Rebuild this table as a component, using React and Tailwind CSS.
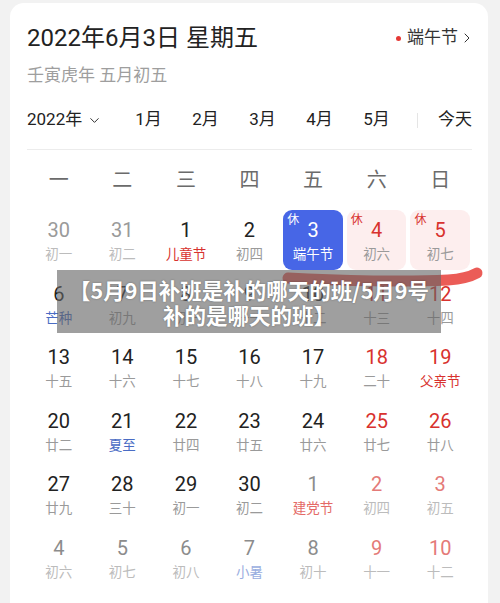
import React from 'react';
import { ChevronDown, ChevronRight } from 'lucide-react';

// colour keys -> full class names
const NUM = {
  base: 'text-[#222222]',
  prev: 'text-[#9a9a9a]',
  red: 'text-[#d8322e]',
  next: 'text-[#8c8c8c]',
  nextRed: 'text-[#e47a78]',
  white: 'text-white',
};

const LUNAR = {
  base: 'text-[#9a9a9a]',
  light: 'text-[#bcbcbc]',
  red: 'text-[#d8322e]',
  blue: 'text-[#4a6cc4]',
  lightRed: 'text-[#e46a66]',
  lightBlue: 'text-[#9aaee0]',
  white: 'text-white',
};

const d = (n, l, nc = 'base', lc = 'base', extra = {}) => ({ n, l, nc, lc, ...extra });

const weeks = [
  [
    d('30', '初一', 'prev', 'light'),
    d('31', '初二', 'prev', 'light'),
    d('1', '儿童节', 'base', 'red'),
    d('2', '初四'),
    d('3', '端午节', 'white', 'white', { today: true, rest: true }),
    d('4', '初六', 'red', 'base', { holiday: true, rest: true }),
    d('5', '初七', 'red', 'base', { holiday: true, rest: true }),
  ],
  [
    d('6', '芒种', 'base', 'blue'),
    d('7', '初九'),
    d('8', '初十'),
    d('9', '十一'),
    d('10', '十二'),
    d('11', '十三', 'red'),
    d('12', '十四', 'red'),
  ],
  [
    d('13', '十五'),
    d('14', '十六'),
    d('15', '十七'),
    d('16', '十八'),
    d('17', '十九'),
    d('18', '二十', 'red'),
    d('19', '父亲节', 'red', 'red'),
  ],
  [
    d('20', '廿二'),
    d('21', '夏至', 'base', 'blue'),
    d('22', '廿四'),
    d('23', '廿五'),
    d('24', '廿六'),
    d('25', '廿七', 'red'),
    d('26', '廿八', 'red'),
  ],
  [
    d('27', '廿九'),
    d('28', '三十'),
    d('29', '初一'),
    d('30', '初二'),
    d('1', '建党节', 'next', 'lightRed'),
    d('2', '初四', 'nextRed', 'light'),
    d('3', '初五', 'nextRed', 'light'),
  ],
  [
    d('4', '初六', 'next', 'light'),
    d('5', '初七', 'next', 'light'),
    d('6', '初八', 'next', 'light'),
    d('7', '小暑', 'next', 'lightBlue'),
    d('8', '初十', 'next', 'light'),
    d('9', '十一', 'nextRed', 'light'),
    d('10', '十二', 'nextRed', 'light'),
  ],
];

const weekdays = ['一', '二', '三', '四', '五', '六', '日'];
const months = ['1月', '2月', '3月', '4月', '5月'];

const DayCell = ({ day }) => {
  const box = day.today
    ? 'bg-[#4766e6]'
    : day.holiday
    ? 'bg-[#fdeeee]'
    : '';
  return (
    <div className="h-[63.5px] p-[2px]">
      <div className={`relative h-full rounded-[9px] flex flex-col items-center pt-[8px] ${box}`}>
        {day.rest && (
          <span
            className={`absolute left-[4px] top-[3px] text-[12px] leading-[14px] ${
              day.today ? 'text-white' : 'text-[#d8322e]'
            }`}
          >
            休
          </span>
        )}
        <span className={`text-[20px] leading-[24px] ${NUM[day.nc]}`}>{day.n}</span>
        <span className={`mt-[3px] text-[13.5px] leading-[18px] ${LUNAR[day.lc]}`}>{day.l}</span>
      </div>
    </div>
  );
};

export default function App() {
  return (
    <div
      className="relative w-[500px] h-[603px] overflow-hidden bg-[#f2f2f2]"
      style={{ fontFamily: 'Roboto, "Noto Sans CJK SC", sans-serif' }}
    >
      <div className="ml-[10px] mt-[3px] w-[478px] h-[640px] bg-white rounded-t-[14px] pl-[17px] pr-[16px] pt-[15px]">
        {/* Header */}
        <div className="h-[40px] flex items-center justify-between">
          <h1 className="text-[24px] leading-[32px] text-[#222222] font-normal">2022年6月3日 星期五</h1>
          <div className="flex items-center text-[17px] text-[#333333]">
            <span className="w-[5px] h-[5px] rounded-full bg-[#e53935] mr-[6px]" />
            端午节
            <ChevronRight size={16} strokeWidth={1.5} className="ml-[1px] -mr-[3px]" />
          </div>
        </div>
        <div className="mt-[6px] h-[24px] flex items-center text-[17px] text-[#9e9e9e]">
          壬寅虎年 五月初五
        </div>

        {/* Month switcher */}
        <div className="mt-[12px] h-[40px] flex items-center whitespace-nowrap text-[17px] text-[#222222]">
          <div className="w-[93px] shrink-0 flex items-center">
            2022年
            <ChevronDown size={15} strokeWidth={1.5} className="ml-[5px]" />
          </div>
          {months.map((m) => (
            <div key={m} className="w-[57px] shrink-0 text-center">
              {m}
            </div>
          ))}
          <div className="ml-[12px] shrink-0 w-px h-[15px] bg-[#e5e5e5]" />
          <div className="ml-auto shrink-0">今天</div>
        </div>
        <div className="mt-[9px] h-px bg-[#ececec]" />

        {/* Weekdays */}
        <div className="mt-[10px] h-[40px] grid grid-cols-7 items-center text-center text-[20px] text-[#6b6b6b]">
          {weekdays.map((w) => (
            <div key={w}>{w}</div>
          ))}
        </div>

        {/* Days */}
        <div className="mt-[8px] grid grid-cols-7">
          {weeks.flat().map((day, i) => (
            <DayCell key={i} day={day} />
          ))}
        </div>
      </div>

      {/* red brush stroke */}
      <svg className="absolute left-0 top-0 pointer-events-none" width="500" height="603">
        <path
          d="M 288 278 C 340 281, 410 282, 448 280 C 462 279, 470 277, 477 273"
          fill="none"
          stroke="#e8403a"
          strokeOpacity="0.85"
          strokeWidth="11"
          strokeLinecap="round"
        />
      </svg>

      {/* title overlay */}
      <div
        className="absolute left-[57px] top-[270px] w-[384px] h-[63px] bg-[rgba(100,100,100,0.62)] flex flex-col items-center justify-center whitespace-nowrap text-white font-bold text-[21.5px] leading-[25px] [text-shadow:0_0_2px_rgba(0,0,0,0.35)]"
        style={{ fontFamily: '"Noto Sans CJK SC", sans-serif' }}
      >
        <div>【5月9日补班是补的哪天的班/5月9号</div>
        <div>补的是哪天的班】</div>
      </div>
    </div>
  );
}
